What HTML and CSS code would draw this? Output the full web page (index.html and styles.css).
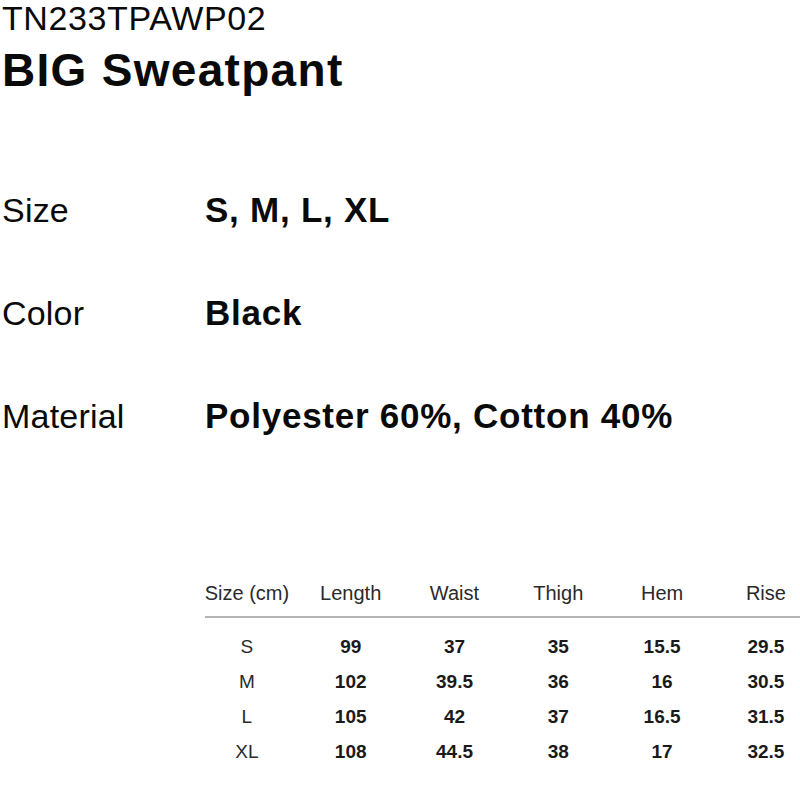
FILE: index.html
```html
<!DOCTYPE html>
<html lang="en">
<head>
<meta charset="utf-8">
<title>BIG Sweatpant</title>
<link rel="stylesheet" href="styles.css">
</head>
<body>
<main class="page">
  <header class="product">
    <div class="code">TN233TPAWP02</div>
    <h1 class="name">BIG Sweatpant</h1>
  </header>
  <section class="specs">
    <div class="spec"><span class="label">Size</span><span class="value">S, M, L, XL</span></div>
    <div class="spec"><span class="label">Color</span><span class="value">Black</span></div>
    <div class="spec"><span class="label">Material</span><span class="value">Polyester 60%, Cotton 40%</span></div>
  </section>
  <section class="chart-wrap">
    <div class="chart">
      <div class="th">Size (cm)</div><div class="th">Length</div><div class="th">Waist</div><div class="th">Thigh</div><div class="th">Hem</div><div class="th">Rise</div>
      <div class="divider"></div>
      <div class="td size">S</div><div class="td">99</div><div class="td">37</div><div class="td">35</div><div class="td">15.5</div><div class="td">29.5</div>
      <div class="td size">M</div><div class="td">102</div><div class="td">39.5</div><div class="td">36</div><div class="td">16</div><div class="td">30.5</div>
      <div class="td size">L</div><div class="td">105</div><div class="td">42</div><div class="td">37</div><div class="td">16.5</div><div class="td">31.5</div>
      <div class="td size">XL</div><div class="td">108</div><div class="td">44.5</div><div class="td">38</div><div class="td">17</div><div class="td">32.5</div>
    </div>
  </section>
</main>
</body>
</html>
```

FILE: styles.css
```css
html, body {
  margin: 0;
  padding: 0;
  background: #fff;
}
body {
  font-family: "Liberation Sans", Arial, sans-serif;
  color: #0a0a0a;
  overflow: hidden;
}
.page {
  width: 800px;
  height: 800px;
  overflow: hidden;
  padding-left: 2px;
  box-sizing: border-box;
}
.product {
  display: flex;
  flex-direction: column;
}
.code {
  font-size: 34px;
  line-height: 36px;
  font-weight: 400;
  letter-spacing: 0.6px;
}
.name {
  margin: 9px 0 0 0;
  font-size: 46px;
  line-height: 50px;
  font-weight: 700;
  letter-spacing: 1.3px;
}
.specs {
  margin-top: 95px;
  display: flex;
  flex-direction: column;
  gap: 63px;
}
.spec {
  display: flex;
  align-items: baseline;
  height: 40px;
}
.label {
  width: 203px;
  font-size: 34px;
  line-height: 40px;
  letter-spacing: 0.2px;
}
.value {
  font-size: 35px;
  line-height: 40px;
  font-weight: 700;
  letter-spacing: 0.75px;
}
.chart-wrap {
  margin-top: 145px;
  margin-left: 193px;
  overflow: hidden;
}
.chart {
  display: grid;
  grid-template-columns: repeat(6, 103.8px);
  width: 623px;
}
.th {
  font-size: 20px;
  line-height: 24px;
  color: #2a2a2a;
  text-align: center;
  padding-bottom: 11px;
}
.divider {
  grid-column: 1 / -1;
  margin-left: 10px;
  height: 2px;
  background: #b4b4b4;
  margin-bottom: 12.4px;
}
.td {
  font-size: 19px;
  line-height: 34.7px;
  font-weight: 700;
  color: #1a1a1a;
  text-align: center;
}
.td.size {
  font-weight: 400;
  color: #2a2a2a;
}
```
